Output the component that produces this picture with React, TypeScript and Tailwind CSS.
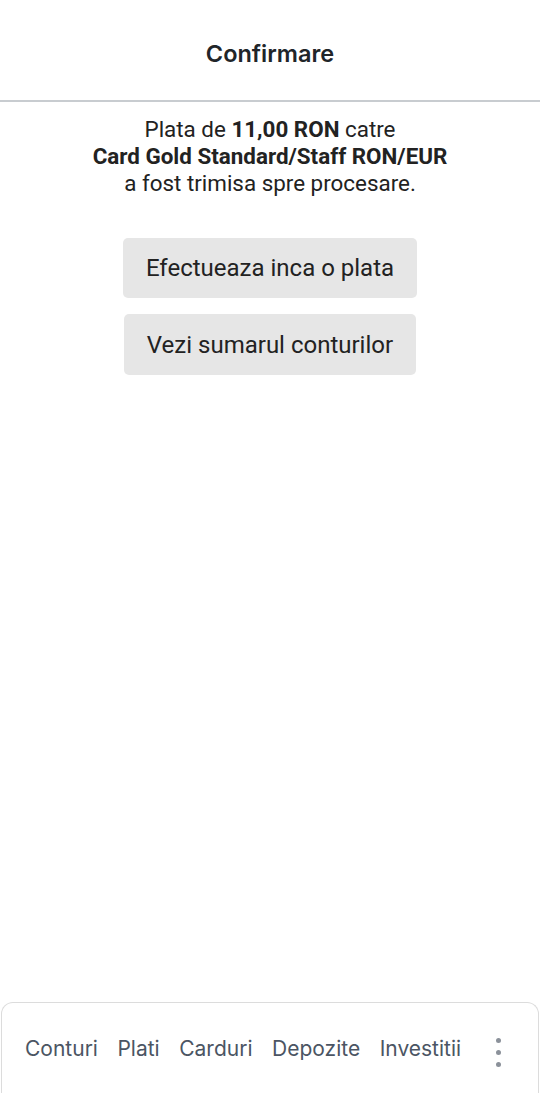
export default function App() {
  return (
    <div className="flex h-[1093px] w-full flex-col bg-white font-['Roboto',sans-serif] text-[#222]">
      <header className="flex h-[102px] items-center justify-center border-b-2 border-[#c8ccd0] pt-[8px]">
        <h1 className="font-['Inter',sans-serif] text-[23.5px] font-semibold text-[#212529]">Confirmare</h1>
      </header>

      <div className="flex flex-1 flex-col items-center pt-[14px]">
        <p className="text-center text-[22.4px] leading-[27px] text-[#222]">
          Plata de <b className="font-bold">11,00 RON</b> catre
          <br />
          <b className="font-bold">Card Gold Standard/Staff RON/EUR</b>
          <br />
          a fost trimisa spre procesare.
        </p>

        <div className="mt-[41px] flex flex-col items-center gap-[16px]">
          <button className="h-[60px] rounded-[5px] bg-[#e6e6e6] px-[23px] text-[24px] text-[#222]">
            Efectueaza inca o plata
          </button>
          <button className="h-[61px] rounded-[5px] bg-[#e6e6e6] px-[23px] text-[24px] text-[#222]">
            Vezi sumarul conturilor
          </button>
        </div>
      </div>

      <nav className="mx-[1px] flex h-[91px] items-start rounded-t-[12px] border border-b-0 border-[#dcdcdc] pl-[23px] pr-[22px] pt-[30px] font-['Inter',sans-serif] text-[21px] text-[#4b5563]">
        <div className="flex gap-[19.5px]">
          <span>Conturi</span>
          <span>Plati</span>
          <span>Carduri</span>
          <span>Depozite</span>
          <span>Investitii</span>
        </div>
        <div className="ml-auto mr-[15px] flex flex-col items-center gap-[7px] pt-[5px]">
          <span className="h-[5px] w-[5px] rounded-full bg-[#8b919a]" />
          <span className="h-[5px] w-[5px] rounded-full bg-[#8b919a]" />
          <span className="h-[5px] w-[5px] rounded-full bg-[#8b919a]" />
        </div>
      </nav>
    </div>
  );
}
